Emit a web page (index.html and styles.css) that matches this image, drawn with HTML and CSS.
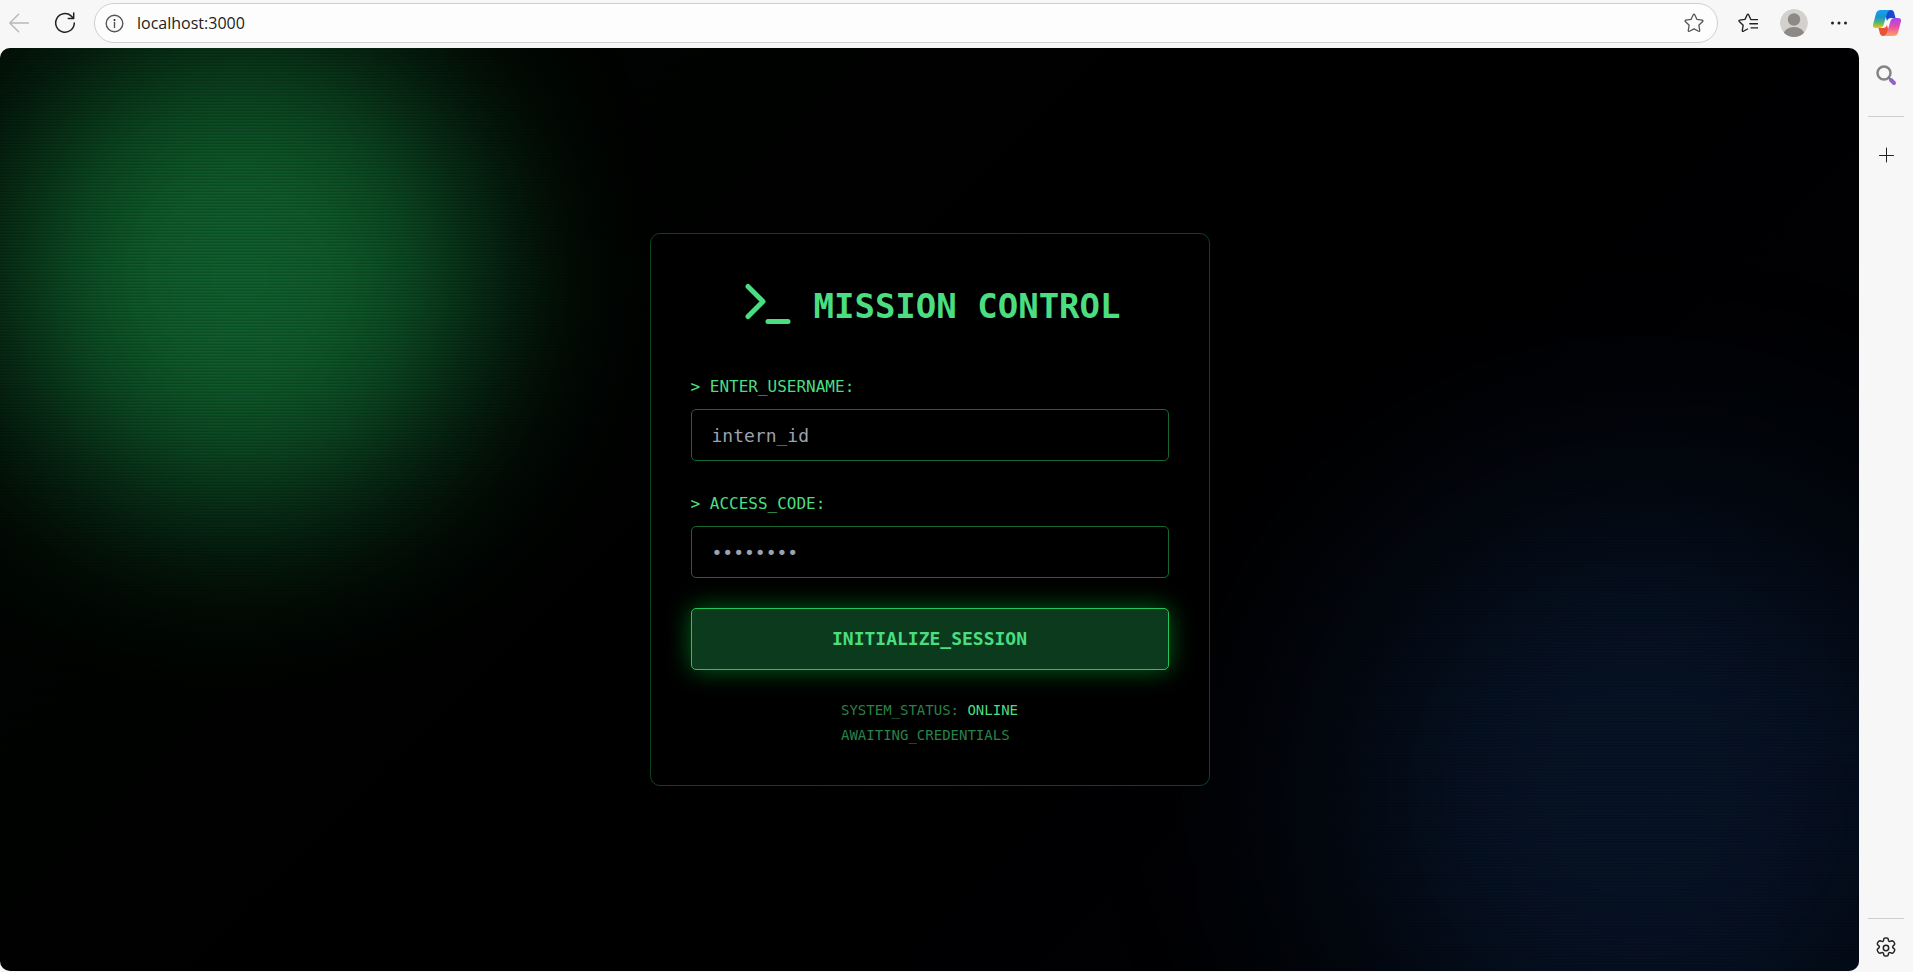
FILE: index.html
```html
<!DOCTYPE html>
<html lang="en">
<head>
<meta charset="utf-8">
<title>Mission Control</title>
<meta name="viewport" content="width=device-width, initial-scale=1">
<link rel="stylesheet" href="styles.css">
</head>
<body class="browser">
  <header class="toolbar">
    <button class="tool tool-muted" type="button" aria-label="Back">
      <svg width="20" height="20" viewBox="0 0 20 20"><path d="M19.5 10H.8M9.6 1.2.8 10l8.8 8.8"/></svg>
    </button>
    <button class="tool" type="button" aria-label="Refresh">
      <svg width="22" height="22" viewBox="0 0 22 22"><path class="line-strong" d="M20.3 11a9.3 9.3 0 1 1-3.2-7.1l2.1 2.2M19.7 1v5.400h-5.400"/></svg>
    </button>
    <div class="address">
      <svg class="address-info" width="19" height="19" viewBox="0 0 19 19"><circle cx="9.500" cy="9.500" r="8.300"/><path d="M9.500 8.500v5"/><circle class="dot" cx="9.500" cy="5.900" r="1"/></svg>
      <input class="address-input" type="text" value="localhost:3000" aria-label="Address" spellcheck="false">
      <button class="star" type="button" aria-label="Add to favorites">
        <svg width="20" height="20" viewBox="0 0 22 22"><path d="M10.200 1.900q.8-1.400 1.600 0l2.500 5.200 5.700.8q1.400.4.500 1.500l-4.200 4 1 5.800q.1 1.400-1.300.9L11 17.400l-5 2.700q-1.400.5-1.300-.9l1-5.800-4.200-4q-.9-1.100.5-1.500l5.700-.8z"/></svg>
      </button>
    </div>
    <button class="tool" type="button" aria-label="Favorites">
      <svg width="20" height="20" viewBox="0 0 22 22"><path class="line-strong" d="M14.100 7.200 11.700 1.900q-.8-1.400-1.600 0L7.700 7l-5.900.9q-1.300.4-.4 1.400l4.300 4.100-1 5.900q0 1.300 1.200.8l4.600-2.500M14.300 7.300h7.200M13 11.800h8.500M14.300 16.300h7.200"/></svg>
    </button>
    <button class="tool" type="button" aria-label="Profile">
      <svg width="28" height="28" viewBox="0 0 28 28"><defs><clipPath id="face"><circle cx="14" cy="14" r="14"/></clipPath></defs><g clip-path="url(#face)"><circle class="avatar-back" cx="14" cy="14" r="14"/><circle class="avatar-person" cx="14" cy="10.500" r="6.200"/><ellipse class="avatar-person" cx="14" cy="26" rx="10.500" ry="8"/></g></svg>
    </button>
    <button class="tool" type="button" aria-label="Settings and more">
      <svg width="18" height="18" viewBox="0 0 18 18"><g class="dot"><circle cx="2.500" cy="9" r="1.500"/><circle cx="9" cy="9" r="1.500"/><circle cx="15.500" cy="9" r="1.500"/></g></svg>
    </button>
    <button class="tool copilot" type="button" aria-label="Copilot">
      <svg width="28" height="28" viewBox="0 0 28 28">
        <defs>
          <linearGradient id="cool" x1="0" y1="0" x2="0" y2="1"><stop offset="0" stop-color="#1b9df0"/><stop offset=".4" stop-color="#1597cf"/><stop offset=".7" stop-color="#55b573"/><stop offset="1" stop-color="#f2c800"/></linearGradient>
          <linearGradient id="warm" x1="0" y1="0" x2="0" y2="1"><stop offset="0" stop-color="#a045ee"/><stop offset=".5" stop-color="#ea4fa5"/><stop offset="1" stop-color="#ffa35c"/></linearGradient>
        </defs>
        <path fill="#1649cf" d="M11 1h7q2.300 0 3 2.200L22.500 9H18q-3 0-4 3z"/>
        <path fill="#ea5238" d="M17 27h-7q-2.300 0-3-2.200L5.500 19H10q3 0 4-3z"/>
        <path fill="url(#cool)" d="M7.500 1H18q-3 .4-3.800 3l-3.700 12q-1 3-4 3H3q-3.800 0-2.800-4L3 4.500Q4 1 7.500 1z"/>
        <path fill="url(#warm)" d="M20.500 27H10q3-.4 3.800-3l3.700-12q1-3 4-3H25q3.800 0 2.800 4L25 23.500Q24 27 20.500 27z"/>
      </svg>
    </button>
  </header>

  <main class="viewport">
    <div class="glow glow-green"></div>
    <div class="glow glow-blue"></div>
    <div class="scanlines"></div>
    <form class="card">
      <div class="brand">
        <svg class="brand-icon" width="60" height="60" viewBox="0 0 24 24"><path d="m4 17 6-6-6-6M12 19h8"/></svg>
        <h1 class="brand-name">MISSION CONTROL</h1>
      </div>
      <div class="fields">
        <div class="field">
          <label class="label" for="username">&gt; ENTER_USERNAME:</label>
          <input class="input" id="username" type="text" placeholder="intern_id">
        </div>
        <div class="field">
          <label class="label" for="code">&gt; ACCESS_CODE:</label>
          <input class="input" id="code" type="password" placeholder="••••••••">
        </div>
        <button class="submit" type="button">INITIALIZE_SESSION</button>
      </div>
      <div class="status">
        <p class="status-line">SYSTEM_STATUS: <span class="online">ONLINE</span></p>
        <p class="status-line">AWAITING_CREDENTIALS</p>
      </div>
    </form>
  </main>

  <aside class="sidebar">
    <button class="tool" type="button" aria-label="Search">
      <svg width="22" height="22" viewBox="0 0 22 22"><circle class="lens" cx="9" cy="9" r="6.500"/><path class="lens-stem" d="m13.800 13.800 2 2"/><path class="lens-grip" d="m16 16 3 3"/></svg>
    </button>
    <hr class="rule">
    <button class="tool" type="button" aria-label="Customize">
      <svg width="16" height="16" viewBox="0 0 16 16"><path class="line-thin" d="M8.500 1v14M1.500 8.500h14"/></svg>
    </button>
    <hr class="rule rule-bottom">
    <button class="tool" type="button" aria-label="Settings">
      <svg width="22" height="22" viewBox="0 0 22 22"><path class="line-strong" d="M8.500 3.500 8.900 1.600Q9.100.9 11 .9t2.100.7l.4 1.900q.4 1.300 1.700.9l1.800-.7q.9-.2 2 1.500t.6 2.300l-1.500 1.400q-1 1.100 0 2.200v-.2l1.500 1.400q.6.600-.5 2.400t-2.100 1.500l-1.800-.6q-1.300-.4-1.700.9l-.4 1.900q-.2.700-2.100.7t-2.100-.7l-.4-1.900q-.4-1.300-1.700-.9l-1.800.6q-1 .3-2.100-1.500t-.5-2.400l1.500-1.400q1-1 0-2L2.400 7.500Q1.900 6.900 3 5.200t2-1.500l1.800.7q1.300.4 1.700-.9z"/><circle class="line-strong" cx="11" cy="11" r="2.700"/></svg>
    </button>
  </aside>
</body>
</html>
```

FILE: styles.css
```css
* {
  box-sizing: border-box;
}

.browser {
  margin: 0;
  min-height: 100vh;
  display: grid;
  grid-template-columns: 1fr 54px;
  grid-template-rows: 48px 1fr;
  background: #f7f7f7;
  font-family: "Open Sans", "Noto Sans", sans-serif;
}

svg {
  display: block;
  fill: none;
  stroke: #555;
  stroke-width: 1.4;
  stroke-linecap: round;
  stroke-linejoin: round;
}

button {
  border: 0;
  padding: 0;
  background: none;
  cursor: pointer;
}

/* Browser toolbar */
.toolbar {
  grid-column: 1 / -1;
  display: flex;
  align-items: center;
  padding: 0 12px 2px 9px;
}

.tool {
  flex: none;
}

.tool-muted svg {
  stroke: #b8b8b8;
}

.toolbar .tool + .tool {
  margin-left: 22px;
}

.toolbar .tool-muted + .tool,
.toolbar .tool + .copilot {
  margin-left: 25px;
}

.line-strong {
  stroke: #222;
  stroke-width: 1.5;
}

.line-thin {
  stroke: #222;
  stroke-width: 1;
}

.dot {
  fill: #222;
  stroke: none;
}

.address {
  flex: 1;
  display: flex;
  align-items: center;
  height: 40px;
  margin: 0 20px 0 18px;
  padding: 0 13px 0 10px;
  border: 1px solid #cfcfcf;
  border-radius: 20px;
  background: #fdfdfd;
}

.address-input {
  flex: 1;
  min-width: 0;
  margin-left: 13px;
  padding: 0;
  border: 0;
  outline: 0;
  background: none;
  color: #222;
  font: 16px/24px "Open Sans", "Noto Sans", sans-serif;
}

.avatar-back {
  fill: #d3d1ce;
  stroke: none;
}

.avatar-person {
  fill: #8d8986;
  stroke: none;
}

.copilot svg {
  stroke: none;
}

/* Page shown by the browser */
.viewport {
  position: relative;
  display: flex;
  align-items: center;
  justify-content: center;
  margin-bottom: 1px;
  overflow: hidden;
  border-radius: 10px;
  background: linear-gradient(135deg, #000602, #000 45%, #000 55%, #000208);
  font-family: "DejaVu Sans Mono", monospace;
}

.glow {
  position: absolute;
  border-radius: 50%;
}

.glow-green {
  top: -12px;
  left: 0;
  width: 480px;
  height: 480px;
  background: #15803d;
  opacity: 0.8;
  filter: blur(90px);
}

.glow-blue {
  right: -80px;
  bottom: -120px;
  width: 600px;
  height: 600px;
  background: #0a1d38;
  opacity: 0.7;
  filter: blur(110px);
}

.scanlines {
  position: absolute;
  inset: 0;
  background: repeating-linear-gradient(rgba(0, 0, 0, 0.06) 0 1px, rgba(0, 0, 0, 0.22) 2px 3px);
}

.card {
  position: relative;
  width: 560px;
  max-width: 100%;
  padding: 40px;
  border: 1px solid #0c4420;
  border-radius: 10px;
  background: rgba(0, 0, 0, 0.8);
  color: #4ade80;
}

.brand {
  display: flex;
  align-items: center;
  justify-content: center;
  gap: 15px;
  margin-bottom: 40px;
}

.brand-icon {
  stroke: #4ade80;
  stroke-width: 2;
}

.brand-name {
  margin: 0;
  padding-top: 4px;
  font-size: 34px;
  line-height: 45px;
  font-weight: 700;
}

.fields {
  display: flex;
  flex-direction: column;
  gap: 30px;
}

.field {
  display: flex;
  flex-direction: column;
  gap: 10px;
}

.label {
  font-size: 16px;
  line-height: 25px;
}

.input {
  width: 100%;
  height: 52px;
  padding: 0 20px;
  border: 1px solid #15692f;
  border-radius: 5px;
  background: #000;
  color: #4ade80;
  font: 18px/28px "DejaVu Sans Mono", monospace;
}

.input::placeholder {
  color: #9ca3af;
  opacity: 1;
}

.submit {
  height: 62px;
  border: 1px solid #22c55e;
  border-radius: 5px;
  background: #0c3a1d;
  box-shadow: 0 0 25px rgba(0, 255, 65, 0.4);
  color: #4ade80;
  font: 700 18px/28px "DejaVu Sans Mono", monospace;
}

.status {
  display: flex;
  flex-direction: column;
  gap: 5px;
  width: fit-content;
  margin: 30px auto 0;
  color: #2a8049;
  font-size: 14px;
  line-height: 20px;
}

.status-line {
  margin: 0;
}

.online {
  color: #4ade80;
}

/* Browser side panel */
.sidebar {
  display: flex;
  flex-direction: column;
  align-items: center;
  padding: 16px 0 13px;
}

.rule {
  width: 36px;
  margin: 30px 0;
  border: 0;
  border-top: 1px solid #cfcfcf;
}

.rule-bottom {
  margin: auto 0 18px;
}

.lens {
  stroke: #858585;
  stroke-width: 2.5;
}

.lens-stem {
  stroke: #777;
  stroke-width: 2;
}

.lens-grip {
  stroke: #9062cc;
  stroke-width: 4;
}
```
